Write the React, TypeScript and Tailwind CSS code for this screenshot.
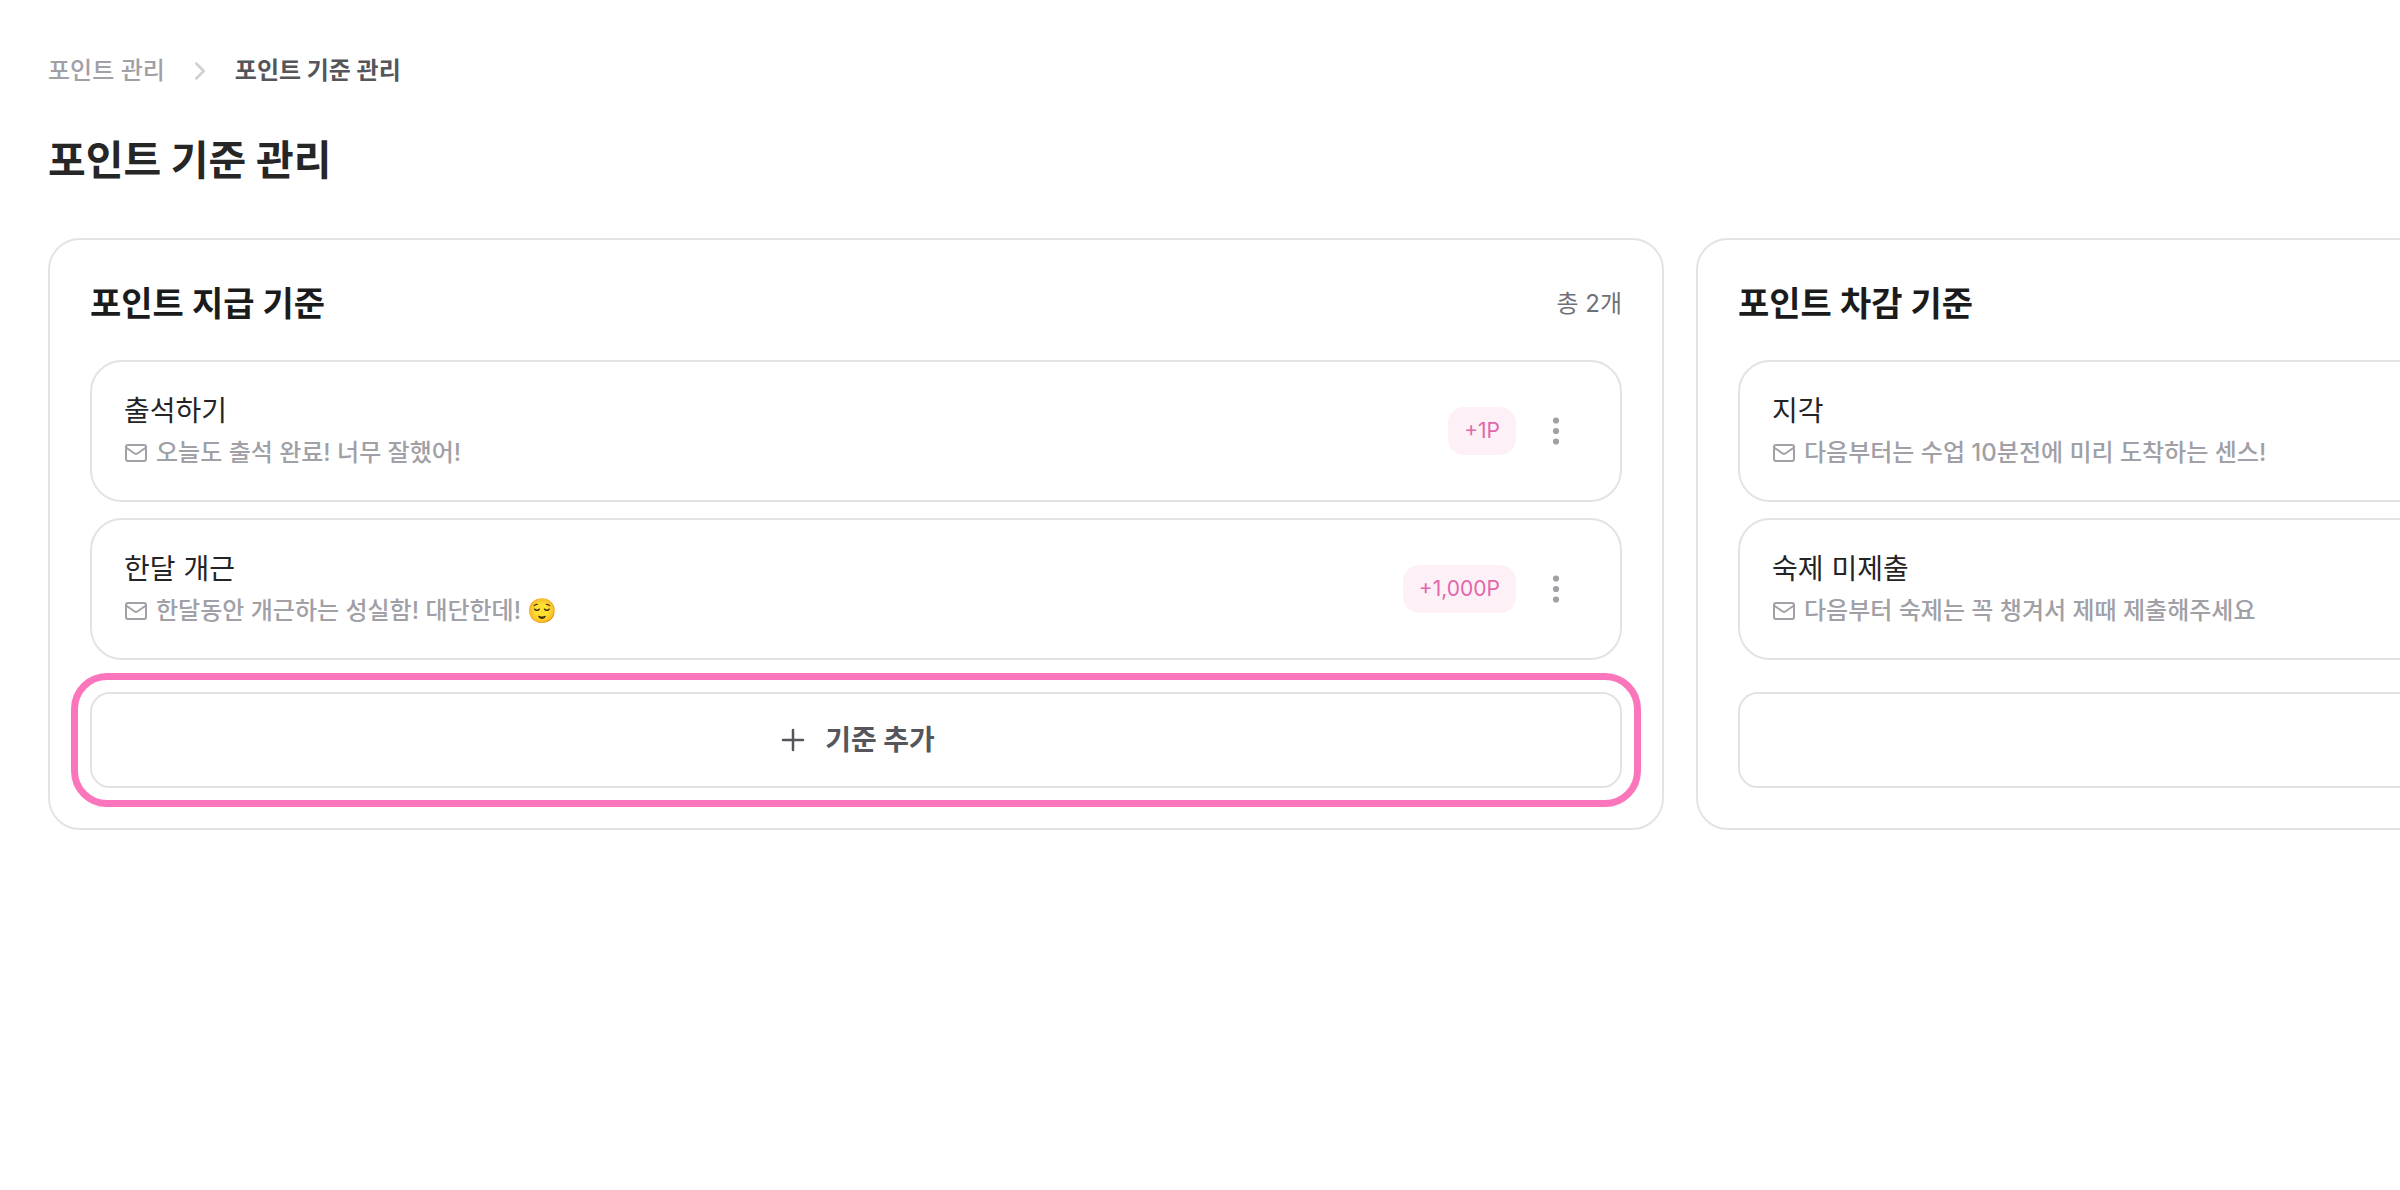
import { ChevronRight } from "lucide-react";

type Rule = {
  id: number;
  name: string;
  message: string;
  point?: number;
};

type RuleGroup = {
  id: string;
  title: string;
  rules: Rule[];
  active?: boolean;
};

const GROUPS: RuleGroup[] = [
  {
    id: "give",
    title: "포인트 지급 기준",
    active: true,
    rules: [
      { id: 1, name: "출석하기", message: "오늘도 출석 완료! 너무 잘했어!", point: 1 },
      { id: 2, name: "한달 개근", message: "한달동안 개근하는 성실함! 대단한데! 😌", point: 1000 },
    ],
  },
  {
    id: "deduct",
    title: "포인트 차감 기준",
    rules: [
      { id: 3, name: "지각", message: "다음부터는 수업 10분전에 미리 도착하는 센스!" },
      { id: 4, name: "숙제 미제출", message: "다음부터 숙제는 꼭 챙겨서 제때 제출해주세요" },
    ],
  },
];

function MailIcon() {
  return (
    <svg className="size-6 shrink-0" viewBox="0 0 24 24" fill="none" stroke="currentColor" strokeWidth="2" aria-hidden="true">
      <rect x="2" y="4" width="20" height="16" rx="2" />
      <path d="M2 6.500 11 12.700a2 2 0 0 0 2 0L22 6.500" />
    </svg>
  );
}

function MoreIcon() {
  return (
    <svg className="size-12" viewBox="0 0 48 48" fill="currentColor" aria-hidden="true">
      <circle cx="24" cy="13.500" r="3.100" />
      <circle cx="24" cy="24" r="3.100" />
      <circle cx="24" cy="34.500" r="3.100" />
    </svg>
  );
}

function PlusIcon() {
  return (
    <svg className="size-8" viewBox="0 0 32 32" fill="none" stroke="currentColor" strokeWidth="2.500" strokeLinecap="round" aria-hidden="true">
      <path d="M16 6v20M6 16h20" />
    </svg>
  );
}

function RuleItem({ rule }: { rule: Rule }) {
  return (
    <li className="flex items-center rounded-[32px] border-2 border-[#e3e3e4] pr-10 pl-8">
      <div className="min-w-0 flex-1 space-y-1 pt-7 pb-[30px]">
        <h3 className="text-[28px] leading-[42px] text-[#242426]">{rule.name}</h3>
        <p className="flex items-center gap-2 text-2xl leading-[34px] font-medium text-[#a0a0a6]">
          <MailIcon />
          {rule.message}
        </p>
      </div>
      {rule.point !== undefined && (
        <span className="rounded-2xl bg-[#fef0f7] px-4 text-[21px] leading-[48px] text-[#e068ab]">
          +{rule.point.toLocaleString("en-US")}P
        </span>
      )}
      <button type="button" aria-label={`${rule.name} 메뉴`} className="ml-4 text-[#a0a0a6]">
        <MoreIcon />
      </button>
    </li>
  );
}

function RuleCard({ group }: { group: RuleGroup }) {
  return (
    <section className="rounded-[32px] border-2 border-[#e3e3e4] p-10">
      <div className="flex items-center justify-between">
        <h2 className="text-[34px] leading-[48px] font-bold text-[#1b1b1c]">{group.title}</h2>
        {group.active && (
          <p className="text-2xl text-[#6f7076]">총 {group.rules.length}개</p>
        )}
      </div>
      <ul className="mt-8 space-y-4">
        {group.rules.map((rule) => (
          <RuleItem key={rule.id} rule={rule} />
        ))}
      </ul>
      <div className="relative mt-8">
        <button
          type="button"
          aria-label={`${group.title} 추가`}
          className="flex h-24 w-full items-center justify-center gap-4 rounded-[20px] border-2 border-[#e3e3e4] text-[28px] font-bold text-[#55565b]"
        >
          <PlusIcon />
          {group.active && "기준 추가"}
        </button>
        {group.active && (
          <span className="pointer-events-none absolute -inset-[19px] rounded-[36px] border-7 border-[#fb75bc]" />
        )}
      </div>
    </section>
  );
}

export default function App() {
  return (
    <div className="min-h-screen overflow-x-auto bg-white font-['Inter','Noto_Sans_CJK_KR',sans-serif] [scrollbar-width:none]">
      <main className="w-[140%] px-12 py-12">
        <nav aria-label="breadcrumb" className="flex items-center gap-5 text-2xl leading-[46px]">
          <a href="#point" className="font-medium text-[#a0a0a6]">
            포인트 관리
          </a>
          <ChevronRight className="size-[30px] text-[#d0d0d3]" strokeWidth={2} />
          <a href="#rules" aria-current="page" className="font-bold text-[#55565b]">
            포인트 기준 관리
          </a>
        </nav>
        <h1 className="mt-[34px] mb-[46px] text-[41px] leading-[64px] font-bold text-[#262627]">
          포인트 기준 관리
        </h1>
        <div className="grid grid-cols-2 gap-8">
          {GROUPS.map((group) => (
            <RuleCard key={group.id} group={group} />
          ))}
        </div>
      </main>
    </div>
  );
}
